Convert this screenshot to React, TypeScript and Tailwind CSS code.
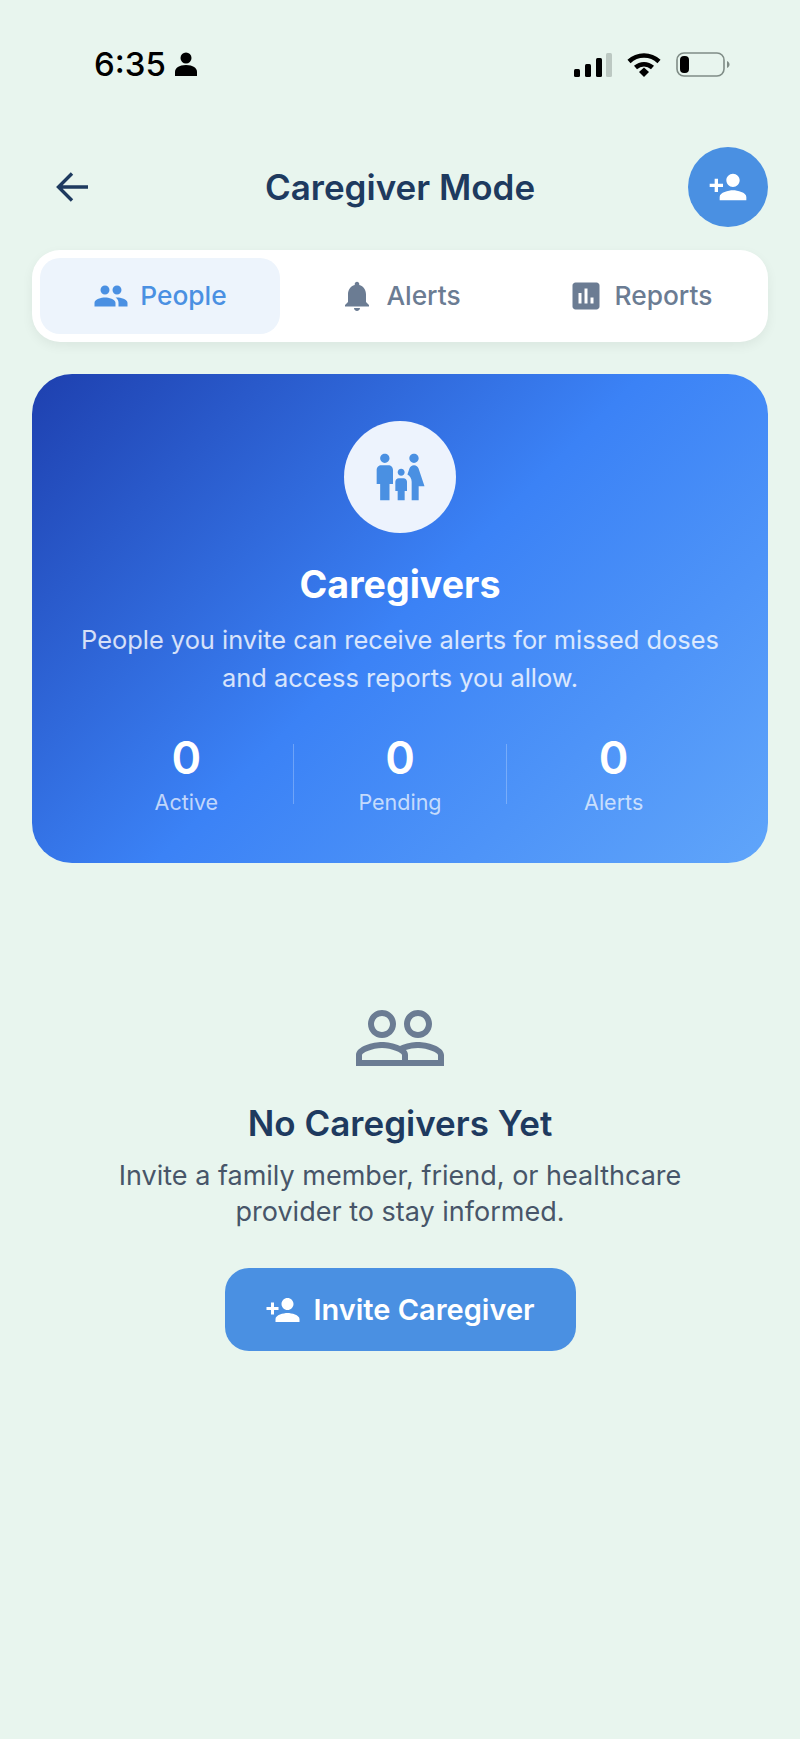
const font = { fontFamily: "Inter, 'Liberation Sans', sans-serif" };

const ICONS = {
  personAdd:
    "M15 12c2.21 0 4-1.79 4-4s-1.79-4-4-4-4 1.79-4 4 1.79 4 4 4zm-9-2V7H4v3H1v2h3v3h2v-3h3v-2H6zm9 4c-2.67 0-8 1.34-8 4v2h16v-2c0-2.66-5.33-4-8-4z",
  people:
    "M16 11c1.66 0 2.99-1.34 2.99-3S17.66 5 16 5c-1.66 0-3 1.34-3 3s1.34 3 3 3zm-8 0c1.66 0 2.99-1.34 2.99-3S9.66 5 8 5C6.34 5 5 6.34 5 8s1.34 3 3 3zm0 2c-2.33 0-7 1.17-7 3.5V19h14v-2.5c0-2.33-4.67-3.5-7-3.5zm8 0c-.29 0-.62.02-.97.05 1.16.84 1.97 1.97 1.97 3.45V19h6v-2.5c0-2.33-4.67-3.5-7-3.5z",
  bell: "M12 22c1.1 0 2-.9 2-2h-4c0 1.1.89 2 2 2zm6-6v-5c0-3.07-1.64-5.64-4.5-6.32V4c0-.83-.67-1.5-1.5-1.5s-1.5.67-1.5 1.5v.68C7.63 5.36 6 7.92 6 11v5l-2 2v1h16v-1l-2-2z",
  report:
    "M19 3H5c-1.1 0-2 .9-2 2v14c0 1.1.9 2 2 2h14c1.1 0 2-.9 2-2V5c0-1.1-.9-2-2-2zM9 17H7v-7h2v7zm4 0h-2V7h2v10zm4 0h-2v-4h2v4z",
  family:
    "M16 4c0-1.11.89-2 2-2s2 .89 2 2-.89 2-2 2-2-.89-2-2zm4 18v-6h2.5l-2.54-7.63C19.68 7.55 18.92 7 18.06 7h-.12c-.86 0-1.63.55-1.9 1.37l-.86 2.58c1.08.6 1.82 1.73 1.82 3.05v8h3zm-7.5-10.5c.83 0 1.5-.67 1.5-1.5s-.67-1.5-1.5-1.5S11 9.17 11 10s.67 1.5 1.5 1.5zM5.5 6c1.11 0 2-.89 2-2s-.89-2-2-2-2 .89-2 2 .89 2 2 2zm2 16v-7H9V9c0-1.1-.9-2-2-2H4c-1.1 0-2 .9-2 2v6h1.5v7h4zm6.5 0v-4h1v-4c0-.82-.68-1.5-1.5-1.5h-2c-.82 0-1.5.68-1.5 1.5v4h1v4h3z",
  peopleOutline:
    "M16.5 13c-1.2 0-3.07.34-4.5 1-1.43-.67-3.3-1-4.5-1C5.33 13 1 14.08 1 16.25V19h22v-2.75c0-2.17-4.33-3.25-6.5-3.25zm-4 4.5h-10v-1.25c0-.54 2.56-1.75 5-1.75s5 1.21 5 1.75v1.25zm9 0H14v-1.25c0-.46-.2-.86-.52-1.22.88-.3 1.96-.53 3.02-.53 2.44 0 5 1.21 5 1.75v1.25zM7.5 12c1.93 0 3.5-1.57 3.5-3.5S9.43 5 7.5 5 4 6.57 4 8.5 5.57 12 7.5 12zm0-5.5c1.1 0 2 .9 2 2s-.9 2-2 2-2-.9-2-2 .9-2 2-2zm9 5.5c1.93 0 3.5-1.57 3.5-3.5S18.43 5 16.5 5 13 6.57 13 8.5s1.57 3.5 3.5 3.5zm0-5.5c1.1 0 2 .9 2 2s-.9 2-2 2-2-.9-2-2 .9-2 2-2z",
};

function Icon({ d, className }: { d: string; className: string }) {
  return (
    <svg viewBox="0 0 24 24" className={className} fill="currentColor">
      <path d={d} />
    </svg>
  );
}

function StatusBar() {
  return (
    <div className="flex h-[147px] items-start justify-between pl-[94px] pr-[70px] pt-[44px] text-black">
      <div className="flex items-center gap-[9px]">
        <span className="text-[33px] leading-[40px] font-medium">6:35</span>
        <svg viewBox="0 0 22 24" className="h-[24px] w-[22px]" fill="currentColor">
          <circle cx="11" cy="6" r="5.5" />
          <path d="M0 24v-4c0-4 4-7 11-7s11 3 11 7v4z" />
        </svg>
      </div>
      <div className="flex items-center gap-[15px] pt-[8px]">
        <svg viewBox="0 0 38 24" className="h-[24px] w-[38px]">
          <rect x="0" y="16" width="6" height="8" rx="1.5" fill="#000" />
          <rect x="11" y="11" width="6" height="13" rx="1.5" fill="#000" />
          <rect x="22" y="5" width="6" height="19" rx="1.5" fill="#000" />
          <rect x="32" y="0" width="6" height="24" rx="1.5" fill="#bcc8c2" />
        </svg>
        <svg viewBox="0 0 34 25" className="h-[25px] w-[34px]" fill="none" stroke="#000">
          <path d="M2 9.5C10.5 1.5 23.5 1.5 32 9.5" strokeWidth="4.5" />
          <path d="M8.5 15.5C13.5 11 20.5 11 25.5 15.5" strokeWidth="4.5" />
          <path d="M12 20l5-4.5 5 4.5-5 5z" fill="#000" stroke="none" />
        </svg>
        <svg viewBox="0 0 54 25" className="h-[25px] w-[54px]">
          <rect x="1" y="1" width="47" height="23" rx="7" fill="none" stroke="#7f8c86" strokeWidth="1.6" />
          <rect x="4" y="4" width="9" height="17" rx="4" fill="#000" />
          <path d="M51 9c2 1 2.5 2.2 2.5 3.5S53 15 51 16z" fill="#7f8c86" />
        </svg>
      </div>
    </div>
  );
}

function Header() {
  return (
    <div className="flex items-center justify-between">
      <div className="flex h-[80px] w-[80px] items-center pl-[24px]">
        <svg viewBox="0 0 32 30" className="h-[30px] w-[32px]" fill="none" stroke="#1e3a5f" strokeWidth="3.4">
          <path d="M16 1.5L2.5 15 16 28.5M2.5 15H32" />
        </svg>
      </div>
      <h1 className="text-[35px] font-semibold text-[#1e3a5f]">Caregiver Mode</h1>
      <div className="flex h-[80px] w-[80px] items-center justify-center rounded-full bg-[#4a90e2] text-white">
        <Icon d={ICONS.personAdd} className="h-[40px] w-[40px]" />
      </div>
    </div>
  );
}

function Tabs() {
  return (
    <div className="mt-[23px] flex h-[92px] rounded-[28px] bg-white p-[8px] shadow-[0_4px_12px_rgba(0,0,0,0.06)]">
      <div className="flex w-[240px] items-center justify-center gap-[11px] rounded-[20px] bg-[#edf4fc] text-[#4a90e2]">
        <Icon d={ICONS.people} className="h-[36px] w-[36px]" />
        <span className="text-[26.3px] font-medium">People</span>
      </div>
      <div className="flex w-[240px] items-center justify-center gap-[11px] text-[#6b7c93]">
        <Icon d={ICONS.bell} className="h-[36px] w-[36px]" />
        <span className="text-[26.3px] font-medium">Alerts</span>
      </div>
      <div className="flex w-[240px] items-center justify-center gap-[11px] text-[#6b7c93]">
        <Icon d={ICONS.report} className="h-[36px] w-[36px]" />
        <span className="text-[26.3px] font-medium">Reports</span>
      </div>
    </div>
  );
}

function Stat({ value, label }: { value: string; label: string }) {
  return (
    <div className="flex flex-1 flex-col items-center">
      <span className="text-[45px] leading-[54px] font-semibold text-white">{value}</span>
      <span className="mt-[3px] text-[21.5px] leading-[28px] text-white/70">{label}</span>
    </div>
  );
}

function SummaryCard() {
  return (
    <div className="mt-[32px] flex h-[489px] flex-col items-center rounded-[40px] bg-[linear-gradient(135deg,#1e40af_0%,#3b82f6_50%,#60a5fa_100%)] px-[48px] pt-[47px]">
      <div className="flex h-[112px] w-[112px] items-center justify-center rounded-full bg-[#edf3fd] text-[#4a90e2]">
        <Icon d={ICONS.family} className="h-[56px] w-[56px]" />
      </div>
      <h2 className="mt-[24px] text-[37.6px] leading-[56px] font-bold text-white">Caregivers</h2>
      <p className="mt-[8px] text-center text-[25.4px] leading-[38px] whitespace-nowrap text-white/80">
        People you invite can receive alerts for missed doses
        <br />
        and access reports you allow.
      </p>
      <div className="mt-[34px] flex w-full items-center">
        <Stat value="0" label="Active" />
        <div className="h-[60px] w-px bg-white/25" />
        <Stat value="0" label="Pending" />
        <div className="h-[60px] w-px bg-white/25" />
        <Stat value="0" label="Alerts" />
      </div>
    </div>
  );
}

function EmptyState() {
  return (
    <div className="mt-[127px] flex flex-col items-center">
      <Icon d={ICONS.peopleOutline} className="h-[96px] w-[96px] text-[#6b7c93]" />
      <h3 className="mt-[15px] text-[35px] leading-[44px] font-semibold text-[#1e3a5f]">No Caregivers Yet</h3>
      <p className="mt-[13px] text-center text-[27px] leading-[35.5px] whitespace-nowrap text-[#475569]">
        Invite a family member, friend, or healthcare
        <br />
        provider to stay informed.
      </p>
      <button className="mt-[39px] flex h-[83px] w-[351px] items-center justify-center gap-[12px] rounded-[24px] bg-[#4a90e2] text-white">
        <Icon d={ICONS.personAdd} className="h-[36px] w-[36px]" />
        <span className="text-[29px] font-semibold">Invite Caregiver</span>
      </button>
    </div>
  );
}

export default function App() {
  return (
    <div style={font} className="h-[1739px] w-[800px] overflow-hidden bg-[#e8f5ee]">
      <StatusBar />
      <div className="px-[32px]">
        <Header />
        <Tabs />
        <SummaryCard />
        <EmptyState />
      </div>
    </div>
  );
}
